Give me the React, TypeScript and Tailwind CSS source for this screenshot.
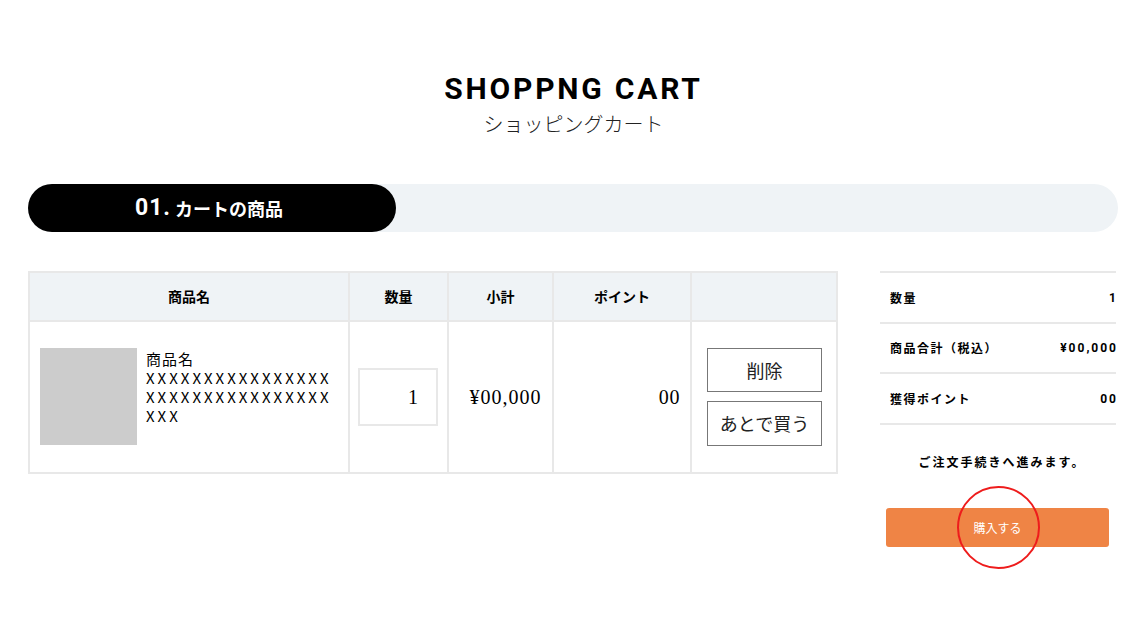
import React from 'react';

const sans = "font-['Roboto','Noto_Sans_CJK_JP',sans-serif]";
const jp = "font-['Noto_Sans_CJK_JP',sans-serif]";
const serif = "font-['Liberation_Serif','Noto_Sans_CJK_JP',serif]";

export default function App() {
  return (
    <div className={`relative min-h-[626px] bg-white px-[28px] text-black ${jp}`}>
      {/* タイトル */}
      <div className="pt-[70px] text-center">
        <h1 className={`text-[30px] font-bold leading-[38px] tracking-[2.8px] ${sans}`}>SHOPPNG CART</h1>
        <p className="mt-[2px] text-[20px] font-light leading-[28px] text-[#222]">ショッピングカート</p>
      </div>

      {/* ステップ */}
      <div className="mt-[46px] flex h-[48px] w-[1090px] rounded-full bg-[#eff3f6]">
        <div className="flex w-[368px] items-center justify-center rounded-full bg-black pr-[6px] text-white">
          <span className={`mr-[4px] text-[23px] font-bold tracking-[1px] ${sans}`}>01.</span>
          <span className="text-[18px] font-bold">カートの商品</span>
        </div>
      </div>

      <div className="mt-[39px] flex gap-[42px]">
        {/* カート表 */}
        <table className="h-[203px] w-[810px] border-collapse border-2 border-[#e8e8e8]">
          <thead>
            <tr className="h-[49px] bg-[#eff3f6] text-[14px] font-bold">
              <th className="w-[320px] border-2 border-[#e8e8e8]">商品名</th>
              <th className="w-[99px] border-2 border-[#e8e8e8]">数量</th>
              <th className="w-[105px] border-2 border-[#e8e8e8]">小計</th>
              <th className="w-[138px] border-2 border-[#e8e8e8]">ポイント</th>
              <th className="border-2 border-[#e8e8e8]"></th>
            </tr>
          </thead>
          <tbody>
            <tr>
              <td className="border-2 border-[#e8e8e8] px-[10px] align-middle">
                <div className="flex gap-[9px]">
                  <div className="mt-[-1px] h-[97px] w-[97px] shrink-0 bg-[#cccccc]"></div>
                  <p className="w-[190px] break-all text-[15px] leading-[19px] tracking-[3px]">
                    <span className="tracking-[1px]">商品名</span>
                    <br />
                    XXXXXXXXXXXXXXXXXXXXXXXXXXXXXXXXXXX
                  </p>
                </div>
              </td>
              <td className="border-2 border-[#e8e8e8] px-[8px]">
                <div className={`flex h-[58px] w-[80px] items-center justify-end border-2 border-[#e8e8e8] pr-[18px] text-[20px] ${serif}`}>1</div>
              </td>
              <td className={`border-2 border-[#e8e8e8] pl-[10px] text-center text-[20px] tracking-[1px] ${serif}`}>¥00,000</td>
              <td className={`border-2 border-[#e8e8e8] pr-[10px] text-right text-[20px] tracking-[0.6px] ${serif}`}>00</td>
              <td className="border-2 border-[#e8e8e8] pl-[15px]">
                <div className="flex flex-col gap-[9px]">
                  <button className="h-[44px] w-[115px] border border-[#777] text-[18px] text-[#222]">削除</button>
                  <button className="h-[45px] w-[115px] border border-[#777] text-[18px] text-[#222]">あとで買う</button>
                </div>
              </td>
            </tr>
          </tbody>
        </table>

        {/* 合計 */}
        <div className="w-[236px]">
          <div className="border-t-2 border-[#e8e8e8] text-[12px] font-bold tracking-[1.5px]">
            <div className="flex h-[51px] items-center justify-between border-b-2 border-[#e8e8e8] pl-[10px]">
              <span>数量</span>
              <span className={`-mr-[2px] tracking-[2px] ${sans}`}>1</span>
            </div>
            <div className="flex h-[50px] items-center justify-between border-b-2 border-[#e8e8e8] pl-[10px]">
              <span>商品合計（税込）</span>
              <span className={`-mr-[2px] tracking-[2px] ${sans}`}>¥00,000</span>
            </div>
            <div className="flex h-[51px] items-center justify-between border-b-2 border-[#e8e8e8] pl-[10px]">
              <span>獲得ポイント</span>
              <span className={`-mr-[2px] tracking-[2px] ${sans}`}>00</span>
            </div>
          </div>
          <p className="mt-[28px] pl-[8px] text-center text-[12px] font-bold tracking-[2px]">ご注文手続きへ進みます。</p>
          <button className="ml-[6px] mt-[37px] h-[39px] w-[223px] rounded-[3px] bg-[#ef8445] text-[12px] text-white">購入する</button>
        </div>
      </div>

      {/* 注釈の円 */}
      <div className="absolute left-[957px] top-[486px] h-[83px] w-[83px] rounded-full border-2 border-[#ee1c1c]"></div>
    </div>
  );
}
